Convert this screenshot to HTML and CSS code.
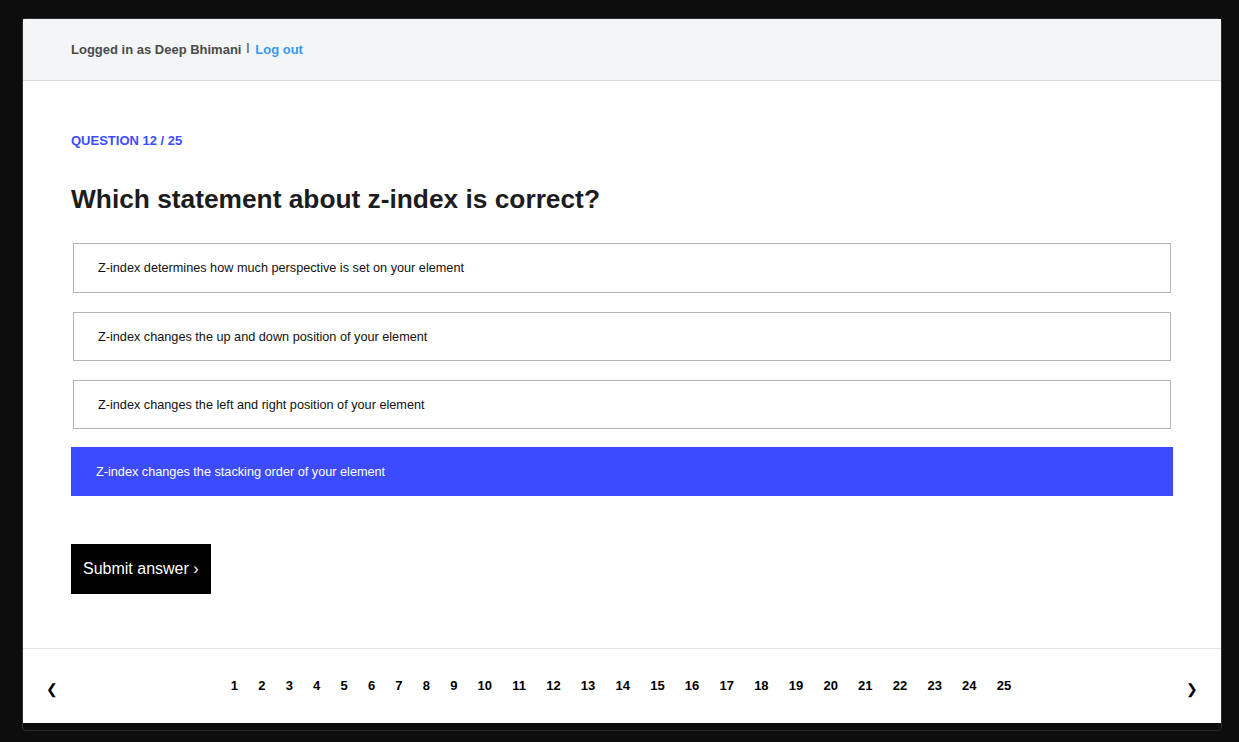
FILE: index.html
```html
<!DOCTYPE html>
<html lang="en">
<head>
<meta charset="utf-8">
<title>Quiz</title>
<link rel="stylesheet" href="styles.css">
</head>
<body>
<div class="frame">
  <div class="panel">
    <header class="topbar">
      <span class="user">Logged in as Deep Bhimani</span>
      <span class="sep">|</span>
      <a class="logout" href="#">Log out</a>
    </header>
    <main class="main">
      <div class="qlabel">QUESTION 12 / 25</div>
      <h1 class="qtitle">Which statement about z-index is correct?</h1>
      <ul class="options">
        <li class="option">Z-index determines how much perspective is set on your element</li>
        <li class="option">Z-index changes the up and down position of your element</li>
        <li class="option">Z-index changes the left and right position of your element</li>
        <li class="option selected">Z-index changes the stacking order of your element</li>
      </ul>
      <button class="submit">Submit answer ›</button>
    </main>
    <footer class="pager">
      <span class="arrow">❮</span>
      <nav class="pages">
        <a>1</a><a>2</a><a>3</a><a>4</a><a>5</a><a>6</a><a>7</a><a>8</a><a>9</a><a>10</a><a>11</a><a>12</a><a>13</a><a>14</a><a>15</a><a>16</a><a>17</a><a>18</a><a>19</a><a>20</a><a>21</a><a>22</a><a>23</a><a>24</a><a>25</a>
      </nav>
      <span class="arrow">❯</span>
    </footer>
  </div>
</div>
</body>
</html>
```
FILE: styles.css
```css
* { box-sizing: border-box; }
html, body { margin: 0; padding: 0; }
body {
  background: #0d0d0d;
  font-family: "Liberation Sans", Arial, sans-serif;
  height: 742px;
  overflow: hidden;
}
.frame {
  margin: 18px 17px 0 22px;
  border: 1px solid #2c2c2c;
  border-radius: 4px;
  padding-bottom: 7px;
  background: #0d0d0d;
}
.panel {
  background: #fff;
}
.topbar {
  height: 62px;
  background: #f4f5f7;
  border-bottom: 1px solid #dcdcdc;
  display: flex;
  align-items: center;
  padding-left: 48px;
  font-size: 13px;
  font-weight: bold;
}
.user { color: #4a4a4a; }
.sep { color: #555; margin: 0 6px 0 5px; font-weight: bold; font-size: 10px; position: relative; top: -2px; }
.logout { color: #3a98f5; text-decoration: none; }
.main {
  padding: 52px 48px 0 48px;
  height: 567px;
}
.qlabel {
  color: #3d4cff;
  font-size: 13px;
  font-weight: bold;
  line-height: 15px;
}
.qtitle {
  margin: 35px 0 0 0;
  font-size: 26.3px;
  line-height: 32px;
  color: #1c1c1c;
  font-weight: bold;
}
.options {
  list-style: none;
  margin: 28px 0 0 0;
  padding: 0;
  display: flex;
  flex-direction: column;
  gap: 19px;
}
.option {
  margin: 0 2px;
  height: 49px;
  border: 1px solid #b3b3b3;
  display: flex;
  align-items: center;
  padding-left: 24px;
  font-size: 12.7px;
  color: #111;
}
.option:first-child { height: 50px; }
.option.selected {
  margin: -1px 0 0 0;
  height: 49px;
  border: none;
  background: #3d4bff;
  color: #fff;
  padding-left: 25px;
}
.submit {
  margin-top: 48px;
  display: block;
  height: 50px;
  width: 140px;
  background: #000;
  color: #fff;
  border: none;
  border-radius: 0;
  font-family: "Liberation Sans", Arial, sans-serif;
  font-size: 16px;
  padding: 0 0 0 12px;
  text-align: left;
}
.pager {
  height: 75px;
  border-top: 1px solid #dde3e6;
  display: flex;
  align-items: center;
  padding: 0 23px 2px 21px;
}
.arrow {
  font-size: 14px;
  color: #000;
  width: 12px;
  position: relative;
  top: 4px;
  margin-left: 2px;
}
.pages {
  flex: 1;
  display: flex;
  justify-content: center;
  font-size: 13px;
  font-weight: bold;
  color: #000;
}
.pages a { padding: 0 10.1px; }
```
